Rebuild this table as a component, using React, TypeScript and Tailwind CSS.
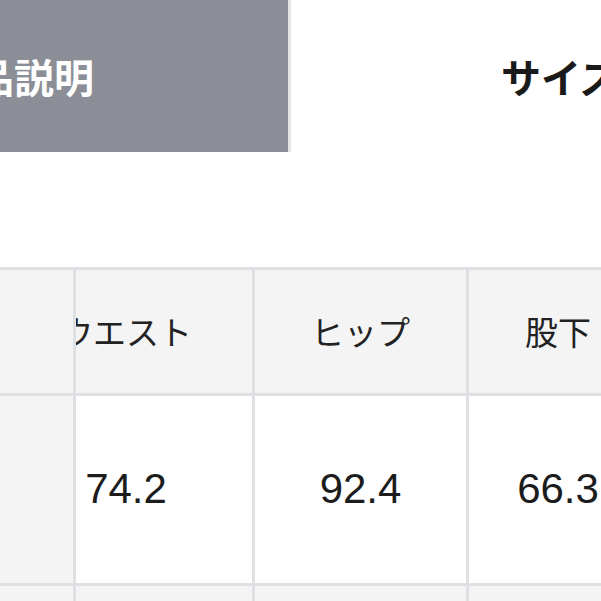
const jp = "font-['Noto_Sans_CJK_JP','Noto_Sans',sans-serif]"
const num = "font-['Liberation_Sans',Arial,sans-serif]"

const headers = ['ウエスト', 'ヒップ', '股下']
const rows = [
  { values: ['74.2', '92.4', '66.3'], striped: false },
  { values: ['', '', ''], striped: true },
]

// widths of the visible columns after the sticky first one (border included)
const colWidths = ['w-[179px]', 'w-[214px]', 'w-[181px]']

function Cell({ index, children }: { index: number; children: React.ReactNode }) {
  if (index === 0) {
    return (
      <div className={`${colWidths[0]} shrink-0 border-r-[3px] border-[#dfe0e3] overflow-hidden flex`}>
        <div className="w-[256px] shrink-0 ml-[-78px] flex items-center justify-center">{children}</div>
      </div>
    )
  }
  return (
    <div className={`${colWidths[index]} shrink-0 border-r-[3px] border-[#dfe0e3] flex items-center justify-center`}>
      {children}
    </div>
  )
}

export default function App() {
  return (
    <div className="w-[601px] h-[601px] overflow-hidden bg-white">
      {/* Tabs */}
      <div className="flex h-[152px]">
        <div className="w-[291px] shrink-0 bg-[#8b8e97] border-r-[3px] border-[#e2e3e6] flex items-center overflow-hidden">
          <span className={`${jp} ml-[-66px] text-[40px] font-bold text-white whitespace-nowrap leading-none`}>
            商品説明
          </span>
        </div>
        <div className="flex-1 flex items-center pl-[210px] overflow-hidden">
          <span className={`${jp} text-[40px] font-bold text-[#1a1a1a] whitespace-nowrap leading-none`}>
            サイズ表
          </span>
        </div>
      </div>

      {/* Size table */}
      <div className="mt-[115px] border-t-[3px] border-[#dfe0e3] w-max">
        <div className="flex h-[126px] border-b-[3px] border-[#dfe0e3] bg-[#f4f4f5]">
          <div className="w-[76px] shrink-0 border-r-[3px] border-[#dfe0e3]" />
          {headers.map((h, i) => (
            <Cell key={h} index={i}>
              <span className={`${jp} text-[33px] font-normal text-[#222] whitespace-nowrap`}>{h}</span>
            </Cell>
          ))}
        </div>
        {rows.map((row, r) => (
          <div
            key={r}
            className={`flex h-[190px] border-b-[3px] border-[#dfe0e3] ${row.striped ? 'bg-[#f4f4f5]' : 'bg-white'}`}
          >
            <div className="w-[76px] shrink-0 border-r-[3px] border-[#dfe0e3] bg-[#f4f4f5]" />
            {row.values.map((v, i) => (
              <Cell key={i} index={i}>
                <span className={`${num} text-[42px] text-[#1c1c1c] -mt-[2px]`}>{v}</span>
              </Cell>
            ))}
          </div>
        ))}
      </div>
    </div>
  )
}
